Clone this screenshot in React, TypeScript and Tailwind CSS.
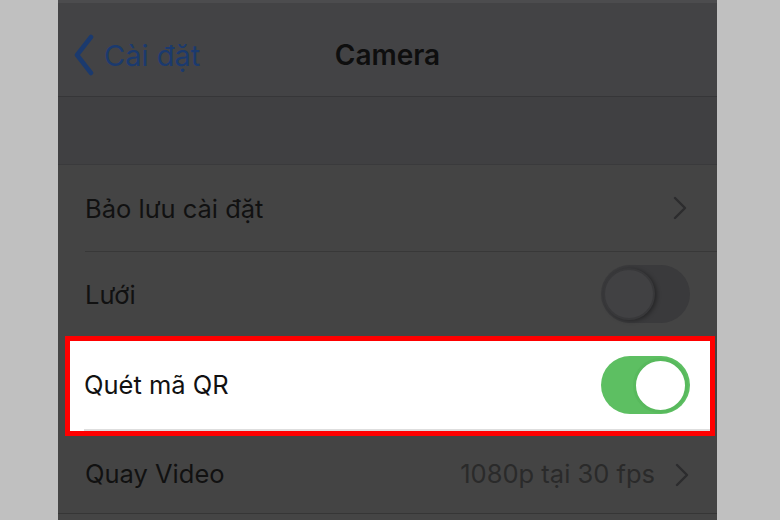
import React from 'react';

const font = { fontFamily: 'Inter, "Noto Sans", sans-serif' };

const Chevron = ({ color = "#2c2c2e" }: { color?: string }) => (
    <svg width="14" height="24" viewBox="0 0 14 24" fill="none">
        <path d="M2 2l10 10-10 10" stroke={color} strokeWidth="2.4" strokeLinecap="round" strokeLinejoin="round" />
    </svg>
);

const Toggle = ({ on }: { on: boolean }) =>
    on ? (
        <div className="w-[89px] h-[58px] rounded-full bg-[#5dbf62] flex items-center justify-end pr-[2px]">
            <div className="w-[55px] h-[55px] rounded-full bg-white border-[3px] border-[#58b95d]" />
        </div>
    ) : (
        <div className="w-[89px] h-[58px] rounded-full bg-[#3a3a3c] flex items-center pl-[2px]">
            <div className="w-[52px] h-[52px] rounded-full bg-[#414143] border-[2px] border-[#38383a] shadow-[2px_1px_4px_rgba(0,0,0,0.35)]" />
        </div>
    );

export default function App() {
    return (
        <div className="w-[780px] h-[520px] bg-[#c0c0c0] pl-[58px] overflow-hidden" style={font}>
            <div className="w-[659px] h-full bg-[#434345] flex flex-col">
                {/* nav bar */}
                <div className="h-[97px] border-t-[3px] border-[#4c4c4e] border-b border-b-[#363638] relative flex items-center justify-center">
                    <div className="absolute left-[14px] top-[31px] flex items-center gap-[8px]">
                        <svg width="24" height="42" viewBox="0 0 24 42" fill="none">
                            <path d="M19 3L5 21l14 18" stroke="#1b3a6e" strokeWidth="4.5" strokeLinecap="round" strokeLinejoin="round" />
                        </svg>
                        <span className="text-[29px] text-[#1b3a6e] leading-none">Cài đặt</span>
                    </div>
                    <span className="text-[28px] font-semibold text-[#0e0e0e] leading-none mt-[10px]">Camera</span>
                </div>
                {/* section gap */}
                <div className="h-[68px] bg-[#404042] border-b border-[#3a3a3c]" />
                {/* rows */}
                <div className="bg-[#444444] flex flex-col">
                    <div className="h-[87px] pl-[27px] flex">
                        <div className="flex-1 flex items-center justify-between pr-[30px] border-b border-[#383838]">
                            <span className="text-[25.5px] text-[#111] mt-[3px]">Bảo lưu cài đặt</span>
                            <Chevron />
                        </div>
                    </div>
                    <div className="h-[84px] pl-[27px] pr-[27px] flex items-center justify-between">
                        <span className="text-[25.5px] text-[#111] mt-[3px]">Lưới</span>
                        <Toggle on={false} />
                    </div>
                    <div className="h-[100px] ml-[7px] mr-[2px] border-[5px] border-[#ff0000] bg-white pl-[14px] flex">
                        <div className="flex-1 flex items-center justify-between pr-[20px] border-b-2 border-[#dedede]">
                            <span className="text-[25.5px] text-[#111]">Quét mã QR</span>
                            <Toggle on={true} />
                        </div>
                    </div>
                    <div className="h-[78px] pl-[27px] pr-[28px] flex items-center justify-between border-b border-[#363636]">
                        <span className="text-[25.5px] text-[#111]">Quay Video</span>
                        <div className="flex items-center gap-[20px]">
                            <span className="text-[25.5px] text-[#2a2a2a]">1080p tại 30 fps</span>
                            <Chevron />
                        </div>
                    </div>
                </div>
                <div className="flex-1 bg-[#454545]" />
            </div>
        </div>
    );
}
